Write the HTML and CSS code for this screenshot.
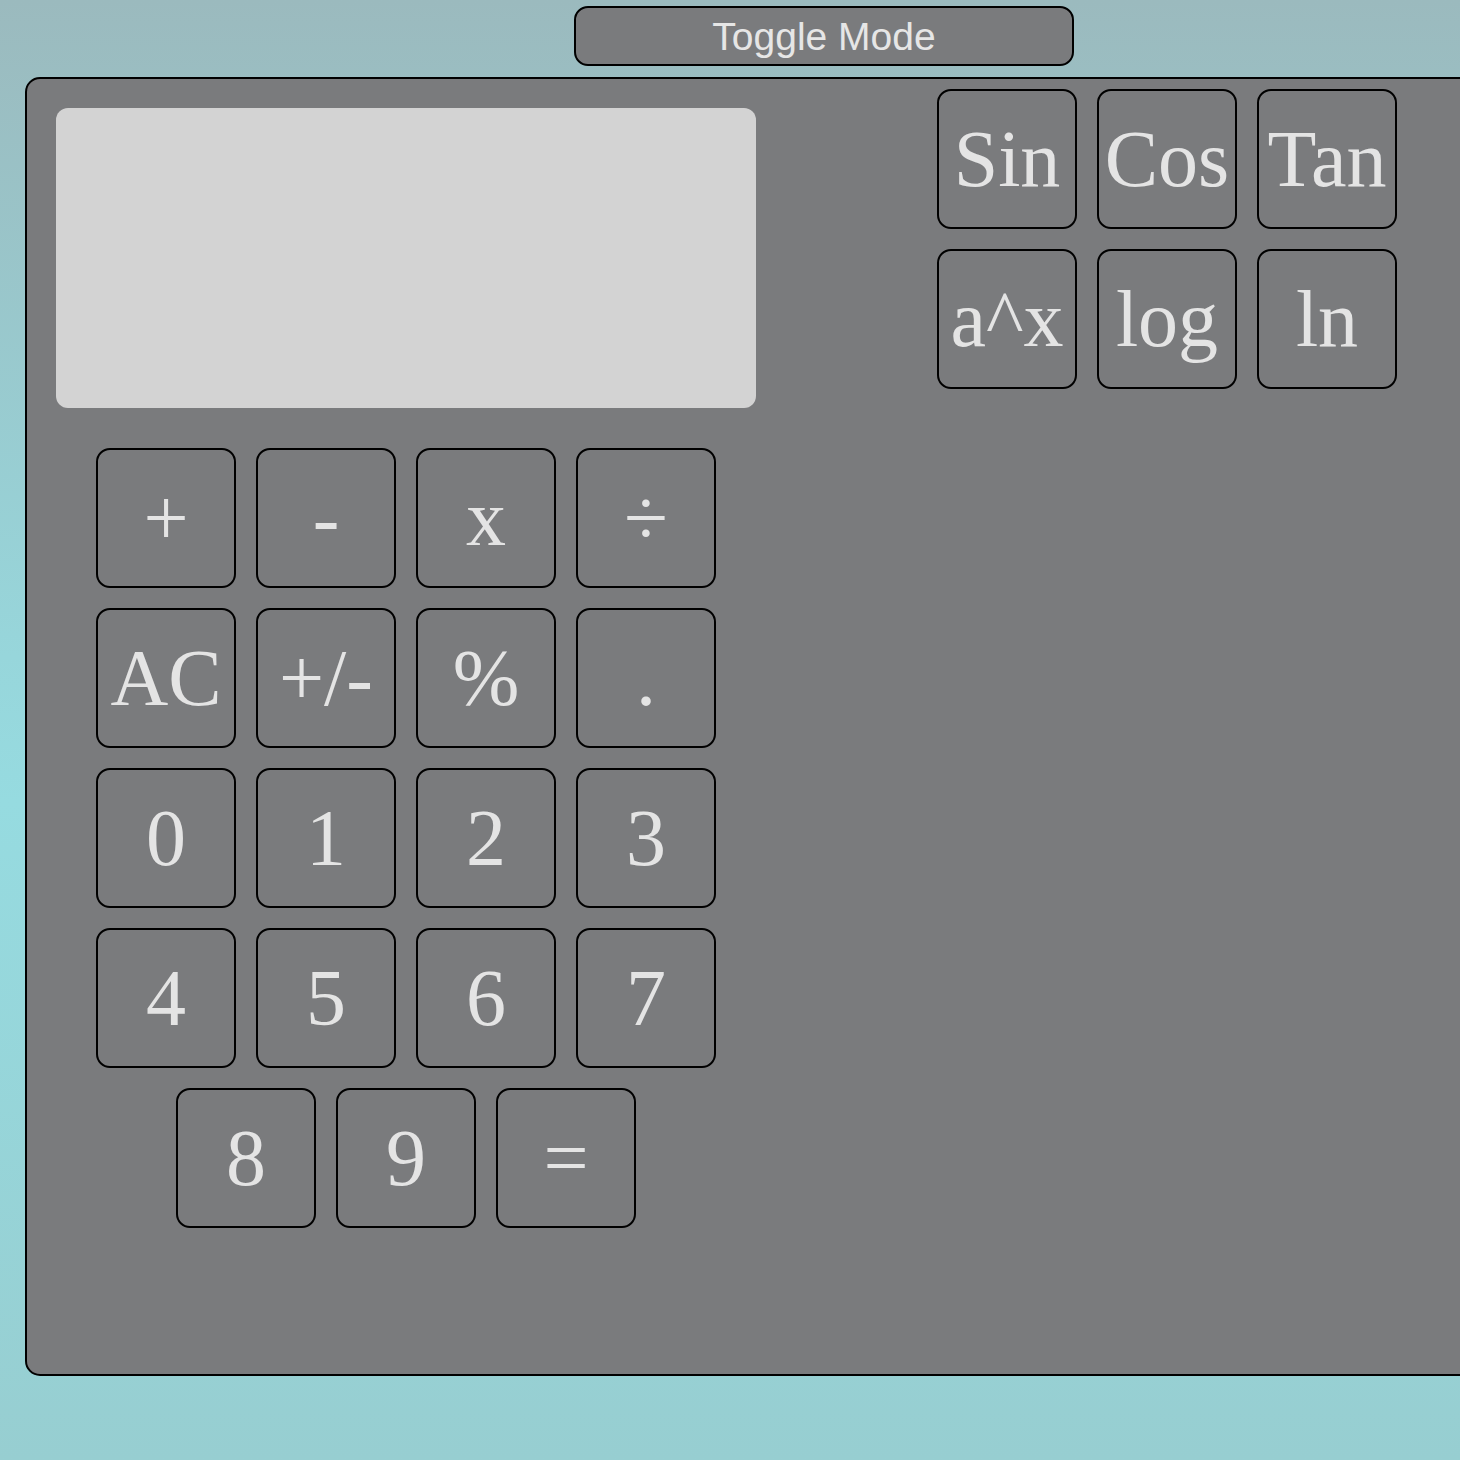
FILE: index.html
```html
<!DOCTYPE html>
<html lang="en">
<head>
<meta charset="utf-8">
<title>Calculator</title>
<link rel="stylesheet" href="styles.css">
</head>
<body>
<div class="app">
  <button class="toggle">Toggle Mode</button>
  <div class="calculator">
    <div class="basic">
      <div class="display"></div>
      <div class="keypad">
        <button class="key">+</button>
        <button class="key">-</button>
        <button class="key">x</button>
        <button class="key">÷</button>
        <button class="key">AC</button>
        <button class="key">+/-</button>
        <button class="key">%</button>
        <button class="key">.</button>
        <button class="key">0</button>
        <button class="key">1</button>
        <button class="key">2</button>
        <button class="key">3</button>
        <button class="key">4</button>
        <button class="key">5</button>
        <button class="key">6</button>
        <button class="key">7</button>
        <button class="key">8</button>
        <button class="key">9</button>
        <button class="key">=</button>
      </div>
    </div>
    <div class="scientific">
      <button class="key">Sin</button>
      <button class="key">Cos</button>
      <button class="key">Tan</button>
      <button class="key">a^x</button>
      <button class="key">log</button>
      <button class="key">ln</button>
    </div>
  </div>
</div>
</body>
</html>
```

FILE: styles.css
```css
html, body {
  margin: 0;
  padding: 0;
}
body {
  min-height: 1460px;
  overflow: hidden;
  background: linear-gradient(to bottom, #9bbabe 0%, #97d6db 45%, #96dbe0 55%, #97ced1 100%);
  font-family: "Liberation Serif", "Times New Roman", serif;
}
.app {
  width: 1648px;
  display: flex;
  flex-direction: column;
  align-items: center;
  padding-top: 6px;
}
.toggle {
  box-sizing: border-box;
  width: 500px;
  height: 60px;
  margin: 0;
  padding: 0;
  background: #7a7b7d;
  border: 2px solid #000;
  border-radius: 14px;
  color: #e6e6e6;
  font-family: "Liberation Sans", Arial, sans-serif;
  font-size: 39px;
  line-height: 1;
}
.calculator {
  box-sizing: border-box;
  align-self: stretch;
  margin: 11px 25px 0;
  height: 1299px;
  background: #7a7b7d;
  border: 2px solid #000;
  border-radius: 15px;
  display: flex;
  align-items: flex-start;
}
.basic {
  margin: 29px 0 0 29px;
  width: 700px;
}
.display {
  height: 300px;
  background: #d3d3d3;
  border-radius: 12px;
  margin-bottom: 30px;
}
.keypad {
  display: flex;
  flex-wrap: wrap;
  justify-content: center;
  padding: 0 30px;
}
.key {
  box-sizing: border-box;
  width: 140px;
  height: 140px;
  margin: 10px;
  padding: 0;
  background: #7a7b7d;
  border: 2px solid #000;
  border-radius: 14px;
  color: #e4e4e4;
  font-family: "Liberation Serif", "Times New Roman", serif;
  font-size: 80px;
  line-height: 1.15;
  white-space: nowrap;
  overflow: visible;
}
.scientific {
  margin: 0 0 0 171px;
  width: 480px;
  display: flex;
  flex-wrap: wrap;
}
```
